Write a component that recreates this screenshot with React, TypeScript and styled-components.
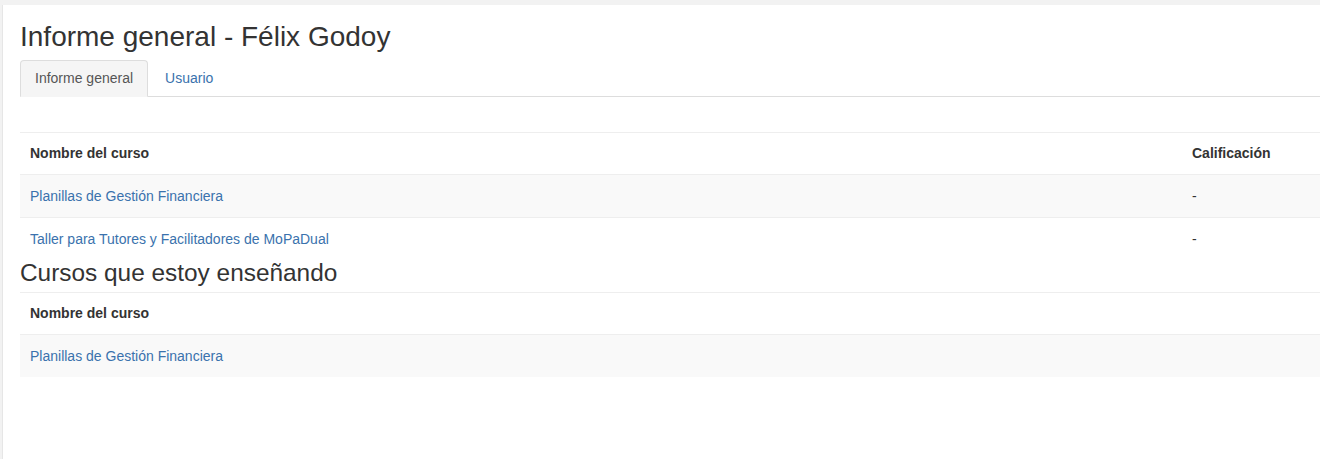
import React from "react";
import styled, { createGlobalStyle } from "styled-components";

const Global = createGlobalStyle`
  html, body { margin: 0; padding: 0; }
  body {
    background: #f2f2f2;
    font-family: "Liberation Sans", Arial, Helvetica, sans-serif;
    color: #333;
    overflow: hidden;
  }
`;

const Panel = styled.div`
  margin: 5px 0 0 2px;
  background: #fff;
  border-left: 1px solid #e6e6e6;
  min-height: 454px;
  padding: 17px 0 0 17px;
  box-sizing: border-box;
`;

const Title = styled.h2`
  margin: 0 0 7px 0;
  font-size: 28px;
  font-weight: 400;
  line-height: 1.1;
  color: #333;
`;

const SubTitle = styled.h3`
  margin: 0;
  font-size: 24.4px;
  font-weight: 400;
  line-height: 1.1;
  color: #333;
`;

const Tabs = styled.ul`
  display: flex;
  list-style: none;
  margin: 0 0 35px 0;
  padding: 0;
  border-bottom: 1px solid #ddd;
`;

const Tab = styled.li<{ $active?: boolean }>`
  margin: 0 2px -1px 0;
  padding: 7px 14px 8px;
  line-height: 20px;
  font-size: 14px;
  border: 1px solid ${(p) => (p.$active ? "#ddd" : "transparent")};
  border-bottom-color: ${(p) => (p.$active ? "#f5f5f5" : "transparent")};
  border-radius: 4px 4px 0 0;
  background: ${(p) => (p.$active ? "#f5f5f5" : "transparent")};
  color: ${(p) => (p.$active ? "#555" : "#3a72ad")};
`;

const Table = styled.table<{ $gap?: number }>`
  width: 1310px;
  border-collapse: collapse;
  margin-top: ${(p) => p.$gap ?? 0}px;
  font-size: 14px;
`;

const Row = styled.tr<{ $striped?: boolean }>`
  background: ${(p) => (p.$striped ? "#f9f9f9" : "#fff")};
`;

const Th = styled.th<{ $w?: number }>`
  text-align: left;
  font-weight: 700;
  color: #333;
  height: 42px;
  padding: 0 10px;
  border-top: 1px solid #eeeeee;
  vertical-align: middle;
  width: ${(p) => (p.$w ? `${p.$w}px` : "auto")};
  box-sizing: border-box;
`;

const Td = styled.td`
  height: 42px;
  padding: 0 10px;
  border-top: 1px solid #eeeeee;
  vertical-align: middle;
  color: #333;
`;

const Link = styled.a`
  color: #3a72ad;
  text-decoration: none;
`;

const courses = [
  { name: "Planillas de Gestión Financiera", grade: "-" },
  { name: "Taller para Tutores y Facilitadores de MoPaDual", grade: "-" },
];

const teaching = ["Planillas de Gestión Financiera"];

export default function App() {
  return (
    <>
      <Global />
      <Panel>
        <Title>Informe general - Félix Godoy</Title>
        <Tabs>
          <Tab $active>Informe general</Tab>
          <Tab>Usuario</Tab>
        </Tabs>
        <Table>
          <thead>
            <Row>
              <Th $w={1162}>Nombre del curso</Th>
              <Th>Calificación</Th>
            </Row>
          </thead>
          <tbody>
            {courses.map((c, i) => (
              <Row key={c.name} $striped={i % 2 === 0}>
                <Td>
                  <Link href="#">{c.name}</Link>
                </Td>
                <Td>{c.grade}</Td>
              </Row>
            ))}
          </tbody>
        </Table>
        <SubTitle>Cursos que estoy enseñando</SubTitle>
        <Table $gap={5}>
          <thead>
            <Row>
              <Th>Nombre del curso</Th>
            </Row>
          </thead>
          <tbody>
            {teaching.map((t, i) => (
              <Row key={t} $striped={i % 2 === 0}>
                <Td>
                  <Link href="#">{t}</Link>
                </Td>
              </Row>
            ))}
          </tbody>
        </Table>
      </Panel>
    </>
  );
}
